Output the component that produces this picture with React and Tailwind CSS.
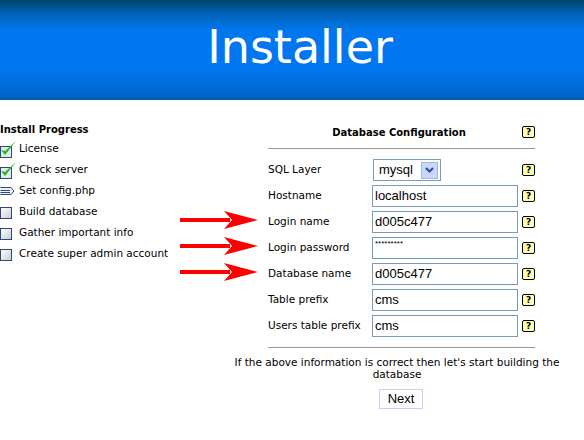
const F = { fontFamily: '"DejaVu Sans", Verdana, sans-serif' };

function Help() {
  return (
    <span className="inline-flex items-center justify-center w-[13px] h-[12px] border border-black bg-[#ffffb0] text-[9px] font-bold leading-none rounded-[2px]">?</span>
  );
}
function Check() {
  return (
    <svg width="18" height="18" viewBox="0 0 18 18" className="shrink-0">
      <rect x="0.5" y="6.5" width="11" height="11" fill="#e8e8e8" stroke="#2a4a7a" />
      <path d="M1 10 L5 15 L16 1 L5 11 Z" fill="#22bb22" />
    </svg>
  );
}
function Box() {
  return (
    <svg width="18" height="18" viewBox="0 0 18 18" className="shrink-0">
      <defs>
        <linearGradient id="bg" x1="0" y1="0" x2="1" y2="1">
          <stop offset="0" stopColor="#fff" />
          <stop offset="1" stopColor="#ccc" />
        </linearGradient>
      </defs>
      <rect x="0.5" y="4.5" width="11" height="11" fill="url(#bg)" stroke="#2a4a7a" />
    </svg>
  );
}
function Doc() {
  return (
    <svg width="18" height="18" viewBox="0 0 18 18" className="shrink-0">
      <path d="M0.5 5.5 H11 L14 9 L11 12.5 H0.5" fill="#eef" stroke="#2a4a7a" />
      <path d="M0.5 8.5 H10 M0.5 10.5 H10" stroke="#2a4a7a" />
    </svg>
  );
}
function Arrow() {
  return (
    <svg width="80" height="20" viewBox="0 0 80 20">
      <rect x="0" y="8" width="50" height="4" fill="#ff0000" />
      <path d="M44 1 L78 10 L44 19 L52 10 Z" fill="#ff0000" />
    </svg>
  );
}

const rows = [
  ['Hostname', 'localhost', false],
  ['Login name', 'd005c477', true],
  ['Login password', '*********', true, true],
  ['Database name', 'd005c477', true],
  ['Table prefix', 'cms', false],
  ['Users table prefix', 'cms', false],
];

export default function App() {
  return (
    <div className="w-[584px] h-[440px] bg-white text-black text-[10.5px]" style={F}>
      <div className="h-[100px] flex items-center justify-center bg-[linear-gradient(#004466_0%,#0060b0_12%,#0077ee_30%,#0077f0_70%,#0066cc_95%,#005aa8_100%)]">
        <span className="text-white text-[46px] ml-[16px] mt-[-6px]">Installer</span>
      </div>
      <div className="flex">
        <div className="w-[180px] pt-[22px]">
          <div className="font-bold text-[10px] h-[16px]">Install Progress</div>
          {[
            [Check, 'License'], [Check, 'Check server'], [Doc, 'Set config.php'],
            [Box, 'Build database'], [Box, 'Gather important info'], [Box, 'Create super admin account'],
          ].map(([I, t]) => (
            <div key={t} className="flex items-center h-[21px] gap-[1px] whitespace-nowrap"><I /><span>{t}</span></div>
          ))}
        </div>
        <div className="w-[88px] pt-[107px] flex flex-col">
          <div className="h-[26px] flex items-center"><Arrow /></div>
          <div className="h-[26px] flex items-center"><Arrow /></div>
          <div className="h-[26px] flex items-center"><Arrow /></div>
        </div>
        <div className="w-[267px] pt-[21px]">
          <div className="flex items-center h-[22px]">
            <span className="flex-1 text-center font-bold text-[10px] pl-[8px]">Database Configuration</span>
            <Help />
          </div>
          <div className="border-t border-[#999] mt-[5px] mb-[8px]" />
          <div className="flex items-center h-[26px]">
            <span className="w-[105px]">SQL Layer</span>
            <div className="w-[68px] h-[22px] border border-[#7a9cb8] flex items-center justify-between pl-[5px] pr-[2px] text-[13px]" style={{ fontFamily: '"Liberation Sans", Arial, sans-serif' }}>
              mysql
              <span className="w-[17px] h-[17px] bg-[#c8d8f8] border border-[#a0b8e8] flex items-center justify-center">
                <svg width="9" height="6" viewBox="0 0 9 6"><path d="M1 1 L4.5 4.5 L8 1" stroke="#2a4aa0" strokeWidth="2" fill="none" /></svg>
              </span>
            </div>
            <span className="flex-1" /><Help />
          </div>
          {rows.map(([l, v, , pw]) => (
            <div key={l} className="flex items-center h-[26px]">
              <span className="w-[104px] whitespace-nowrap">{l}</span>
              <div className={`w-[146px] h-[22px] border border-[#7a9cb8] px-[2px] flex ${pw ? 'items-start text-[8px]' : 'items-center text-[13px]'}`} style={{ fontFamily: '"Liberation Sans", Arial, sans-serif' }}>{v}</div>
              <span className="flex-1" /><Help />
            </div>
          ))}
          <div className="border-t border-[#999] mt-[8px]" />
        </div>
      </div>
      <div className="text-center pl-[216px] pr-[6px] mt-[8px] leading-[12px]">If the above information is correct then let's start building the database</div>
      <div className="flex justify-center pl-[218px] mt-[9px]">
        <div className="border border-[#ccccff] px-[8px] h-[20px] flex items-center text-[13px]" style={{ fontFamily: '"Liberation Sans", Arial, sans-serif' }}>Next</div>
      </div>
    </div>
  );
}
